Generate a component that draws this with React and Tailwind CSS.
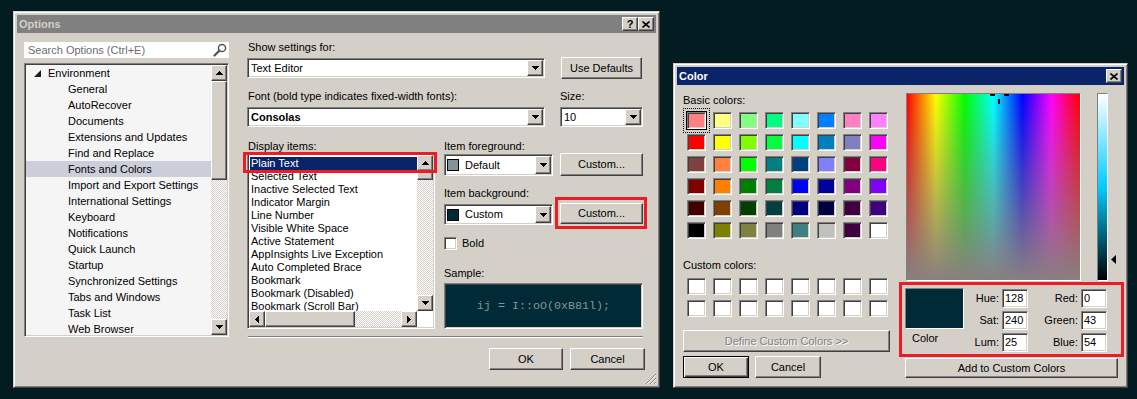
import React from "react";

// classic 3D edges
const raised =
  "bg-[#d4d0c8] border border-t-white border-l-white border-b-[#404040] border-r-[#404040] shadow-[inset_-1px_-1px_0_#808080]";
const sunken =
  "border border-t-[#808080] border-l-[#808080] border-b-white border-r-white shadow-[inset_1px_1px_0_#404040,inset_-1px_-1px_0_#d4d0c8]";
const checker =
  "bg-[image:repeating-conic-gradient(#d4d0c8_0_25%,#ffffff_0_50%)] bg-[length:2px_2px]";

const treeItems = [
  "General",
  "AutoRecover",
  "Documents",
  "Extensions and Updates",
  "Find and Replace",
  "Fonts and Colors",
  "Import and Export Settings",
  "International Settings",
  "Keyboard",
  "Notifications",
  "Quick Launch",
  "Startup",
  "Synchronized Settings",
  "Tabs and Windows",
  "Task List",
  "Web Browser",
];

const displayItems = [
  "Plain Text",
  "Selected Text",
  "Inactive Selected Text",
  "Indicator Margin",
  "Line Number",
  "Visible White Space",
  "Active Statement",
  "AppInsights Live Exception",
  "Auto Completed Brace",
  "Bookmark",
  "Bookmark (Disabled)",
  "Bookmark (Scroll Bar)",
];

const basicColors = [
  "bg-[#ff8080]", "bg-[#ffff80]", "bg-[#80ff80]", "bg-[#00ff80]", "bg-[#80ffff]", "bg-[#0080ff]", "bg-[#ff80c0]", "bg-[#ff80ff]",
  "bg-[#ff0000]", "bg-[#ffff00]", "bg-[#80ff00]", "bg-[#00ff40]", "bg-[#00ffff]", "bg-[#0080c0]", "bg-[#8080c0]", "bg-[#ff00ff]",
  "bg-[#804040]", "bg-[#ff8040]", "bg-[#00ff00]", "bg-[#008080]", "bg-[#004080]", "bg-[#8080ff]", "bg-[#800040]", "bg-[#ff0080]",
  "bg-[#800000]", "bg-[#ff8000]", "bg-[#008000]", "bg-[#008040]", "bg-[#0000ff]", "bg-[#0000a0]", "bg-[#800080]", "bg-[#8000ff]",
  "bg-[#400000]", "bg-[#804000]", "bg-[#004000]", "bg-[#004040]", "bg-[#000080]", "bg-[#000040]", "bg-[#400040]", "bg-[#400080]",
  "bg-[#000000]", "bg-[#808000]", "bg-[#808040]", "bg-[#808080]", "bg-[#408080]", "bg-[#c0c0c0]", "bg-[#400040]", "bg-[#ffffff]",
];

function Tri({ dir }) {
  if (dir === "up")
    return (
      <svg width="7" height="4" viewBox="0 0 7 4" shapeRendering="crispEdges">
        <path d="M0 4h7L3.5 0z" fill="#000" />
      </svg>
    );
  if (dir === "left")
    return (
      <svg width="4" height="7" viewBox="0 0 4 7" shapeRendering="crispEdges">
        <path d="M4 0v7L0 3.5z" fill="#000" />
      </svg>
    );
  if (dir === "right")
    return (
      <svg width="4" height="7" viewBox="0 0 4 7" shapeRendering="crispEdges">
        <path d="M0 0v7L4 3.5z" fill="#000" />
      </svg>
    );
  return (
    <svg width="7" height="4" viewBox="0 0 7 4" shapeRendering="crispEdges">
      <path d="M0 0h7L3.5 4z" fill="#000" />
    </svg>
  );
}

function ArrowBtn({ dir, className = "w-[16px] h-[16px]" }) {
  return (
    <div className={`${raised} ${className} flex items-center justify-center shrink-0`}>
      <Tri dir={dir} />
    </div>
  );
}

function Btn({ children, className = "", isDefault, disabled }) {
  const edge = isDefault
    ? "bg-[#d4d0c8] border border-black shadow-[inset_1px_1px_0_#fff,inset_-1px_-1px_0_#404040,inset_-2px_-2px_0_#808080]"
    : raised;
  const tone = disabled ? "text-[#808080] [text-shadow:1px_1px_0_#ffffff]" : "text-black";
  return (
    <button className={`${edge} ${tone} ${className} flex items-center justify-center shrink-0`}>
      {children}
    </button>
  );
}

function Combo({ className, children }) {
  return (
    <div className={`${sunken} bg-white p-[1px] flex items-stretch shrink-0 ${className}`}>
      <div className="flex-1 flex items-center overflow-hidden">{children}</div>
      <ArrowBtn dir="down" className="w-[16px]" />
    </div>
  );
}

function TitleBtn({ children }) {
  return (
    <div className={`${raised} w-[16px] h-[14px] flex items-center justify-center font-bold text-[11px] leading-none`}>
      {children}
    </div>
  );
}

function CloseGlyph() {
  return (
    <svg width="8" height="7" viewBox="0 0 8 7">
      <path d="M0.5 0.5L7.5 6.5M7.5 0.5L0.5 6.5" stroke="#000" strokeWidth="1.6" />
    </svg>
  );
}

function VScroll({ thumb }) {
  return (
    <div className="w-[16px] flex flex-col shrink-0">
      <ArrowBtn dir="up" />
      <div className={`${raised} ${thumb}`} />
      <div className={`flex-1 ${checker}`} />
      <ArrowBtn dir="down" />
    </div>
  );
}

function OptionsWindow() {
  return (
    <div className="absolute left-[13px] top-[11px] w-[647px] h-[377px] bg-[#d4d0c8] p-[3px] border border-t-[#d4d0c8] border-l-[#d4d0c8] border-b-[#404040] border-r-[#404040] shadow-[inset_1px_1px_0_#fff,inset_-1px_-1px_0_#808080] flex flex-col">
      {/* Title bar */}
      <div className="h-[18px] bg-[#808080] flex items-center pl-[2px] pr-[2px] shrink-0">
        <span className="font-bold text-[#d4d0c8]">Options</span>
        <div className="ml-auto flex">
          <TitleBtn>?</TitleBtn>
          <TitleBtn>
            <CloseGlyph />
          </TitleBtn>
        </div>
      </div>

      <div className="flex pl-[7px] pt-[7px]">
        {/* Left: search + tree */}
        <div className="w-[205px] flex flex-col shrink-0">
          <div className="mt-[2px] h-[16px] bg-white flex items-center pl-[4px] pr-[2px] text-[#6d6d6d]">
            <span>Search Options (Ctrl+E)</span>
            <svg className="ml-auto" width="14" height="14" viewBox="0 0 14 14">
              <circle cx="9" cy="5" r="3.6" fill="none" stroke="#555" strokeWidth="1.5" />
              <path d="M6.4 7.6L1.5 12.5" stroke="#555" strokeWidth="2.2" strokeLinecap="round" />
            </svg>
          </div>
          <div className={`mt-[5px] h-[274px] ${sunken} p-[1px] bg-[#f5f5f5] flex`}>
            <div className="flex-1 overflow-hidden">
              <div className="h-[16px] flex items-center pl-[8px]">
                <svg width="7" height="7" viewBox="0 0 7 7">
                  <path d="M7 0V7H0z" fill="#1e1e1e" />
                </svg>
                <span className="ml-[7px]">Environment</span>
              </div>
              {treeItems.map((t) => (
                <div
                  key={t}
                  className={`h-[16px] flex items-center pl-[42px] whitespace-nowrap ${
                    t === "Fonts and Colors" ? "bg-[#cdcedc]" : ""
                  }`}
                >
                  {t}
                </div>
              ))}
            </div>
            <VScroll thumb="h-[99px]" />
          </div>
        </div>

        {/* Right: settings */}
        <div className="ml-[18px] w-[398px] flex flex-col">
          <div className="h-[14px] leading-[14px] pl-[1px]">Show settings for:</div>
          <div className="mt-[3px] flex items-start">
            <Combo className="mt-[1px] w-[298px] h-[20px]">
              <span className="pl-[2px]">Text Editor</span>
            </Combo>
            <Btn className="ml-[16px] w-[81px] h-[22px]">Use Defaults</Btn>
          </div>

          <div className="mt-[10px] flex h-[14px] leading-[14px]">
            <span className="pl-[1px] w-[313px]">Font (bold type indicates fixed-width fonts):</span>
            <span>Size:</span>
          </div>
          <div className="mt-[4px] flex">
            <Combo className="w-[298px] h-[20px]">
              <span className="pl-[2px] font-bold">Consolas</span>
            </Combo>
            <Combo className="ml-[15px] w-[83px] h-[20px]">
              <span className="pl-[2px]">10</span>
            </Combo>
          </div>

          <div className="mt-[12px] flex">
            {/* Display items list */}
            <div className="w-[188px] flex flex-col shrink-0">
              <div className="h-[14px] leading-[14px] pl-[1px]">Display items:</div>
              <div className={`h-[176px] ${sunken} p-[1px] bg-white flex flex-col`}>
                <div className="h-[156px] flex">
                  <div className="flex-1 overflow-hidden pt-[2px]">
                    {displayItems.map((t, i) => (
                      <div
                        key={t}
                        className={`h-[13px] flex items-center whitespace-nowrap ${
                          i === 0 ? "ml-[1px] pl-[1px] bg-[#0a246a] text-white" : "pl-[2px]"
                        }`}
                      >
                        {t}
                      </div>
                    ))}
                  </div>
                  <VScroll thumb="h-[9px]" />
                </div>
                <div className="h-[16px] flex">
                  <ArrowBtn dir="left" />
                  <div className={`${raised} w-[90px]`} />
                  <div className={`flex-1 ${checker}`} />
                  <ArrowBtn dir="right" />
                  <div className="w-[16px] bg-white" />
                </div>
              </div>
            </div>

            {/* Foreground / background / sample */}
            <div className="ml-[9px] w-[199px] flex flex-col">
              <div className="h-[14px] leading-[14px]">Item foreground:</div>
              <div className="flex items-start">
                <Combo className="mt-[1px] w-[109px] h-[22px]">
                  <div className="ml-[1px] w-[12px] h-[12px] border border-black bg-[#839496]" />
                  <span className="ml-[6px]">Default</span>
                </Combo>
                <Btn className="ml-[7px] w-[83px] h-[23px]">Custom...</Btn>
              </div>

              <div className="mt-[10px] h-[14px] leading-[14px]">Item background:</div>
              <div className="mt-[3px] flex items-start">
                <Combo className="mt-[1px] w-[109px] h-[21px]">
                  <div className="ml-[1px] w-[12px] h-[12px] border border-black bg-[#002b36]" />
                  <span className="ml-[6px]">Custom</span>
                </Combo>
                <Btn className="ml-[7px] w-[83px] h-[21px]">Custom...</Btn>
              </div>

              <div className="mt-[12px] h-[13px] flex items-center">
                <div className={`w-[13px] h-[13px] ${sunken} bg-white`} />
                <span className="ml-[5px]">Bold</span>
              </div>

              <div className="mt-[16px] h-[14px] leading-[14px]">Sample:</div>
              <div
                className={`mt-[3px] h-[46px] ${sunken} bg-[#002b36] flex items-center justify-center font-['Liberation_Mono',monospace] text-[11.7px] text-[#839496]`}
              >
                ij = I::oO(0xB81l);
              </div>
            </div>
          </div>

          <div className="mt-[7px] ml-[1px] w-[395px] h-[2px] border-t border-t-[#808080] border-b border-b-white" />

          <div className="mt-[10px] flex justify-end">
            <Btn className="w-[74px] h-[22px]">OK</Btn>
            <Btn className="ml-[7px] w-[75px] h-[22px]">Cancel</Btn>
          </div>
        </div>
      </div>

      {/* size grip */}
      <svg className="absolute right-[2px] bottom-[2px]" width="12" height="12" viewBox="0 0 12 12">
        <path d="M11 1L1 11M11 5L5 11M11 9L9 11" stroke="#808080" strokeWidth="1" />
        <path d="M11 2L2 11M11 6L6 11M11 10L10 11" stroke="#ffffff" strokeWidth="1" />
      </svg>
    </div>
  );
}

function Field({ label, value, labelW }) {
  return (
    <div className="flex items-center h-[19px]">
      <span className={`${labelW} text-right`}>{label}</span>
      <div className={`ml-[3px] w-[26px] h-[19px] ${sunken} bg-white flex items-center pl-[2px]`}>{value}</div>
    </div>
  );
}

function ColorWindow() {
  return (
    <div className="absolute left-[673px] top-[63px] w-[455px] h-[325px] bg-[#d4d0c8] p-[3px] border border-t-[#d4d0c8] border-l-[#d4d0c8] border-b-[#404040] border-r-[#404040] shadow-[inset_1px_1px_0_#fff,inset_-1px_-1px_0_#808080] flex flex-col">
      <div className="h-[18px] bg-[#0a246a] flex items-center pl-[2px] pr-[2px] shrink-0">
        <span className="font-bold text-white">Color</span>
        <div className="ml-auto flex">
          <TitleBtn>
            <CloseGlyph />
          </TitleBtn>
        </div>
      </div>

      <div className="flex pl-[6px] pt-[8px]">
        {/* Left column */}
        <div className="w-[207px] flex flex-col shrink-0">
          <div className="h-[14px] leading-[14px]">Basic colors:</div>
          <div className="mt-[5px] ml-[4px] grid grid-cols-[repeat(8,19px)] gap-x-[7px] gap-y-[5px]">
            {basicColors.map((c, i) => (
              <div
                key={i}
                className={`w-[19px] h-[17px] ${sunken} ${c} ${
                  i === 0 ? "ring-1 ring-black outline-1 outline-dotted outline-black outline-offset-[3px]" : ""
                }`}
              />
            ))}
          </div>

          <div className="mt-[19px] h-[14px] leading-[14px]">Custom colors:</div>
          <div className="mt-[6px] ml-[4px] grid grid-cols-[repeat(8,19px)] gap-x-[7px] gap-y-[5px]">
            {Array.from({ length: 16 }).map((_, i) => (
              <div key={i} className={`w-[19px] h-[17px] ${sunken} bg-white`} />
            ))}
          </div>

          <Btn disabled className="mt-[13px] w-[207px] h-[22px]">
            Define Custom Colors &gt;&gt;
          </Btn>
          <div className="mt-[4px] flex">
            <Btn isDefault className="w-[66px] h-[22px]">
              OK
            </Btn>
            <Btn className="ml-[6px] w-[66px] h-[22px]">Cancel</Btn>
          </div>
        </div>

        {/* Right column */}
        <div className="ml-[15px] w-[219px] flex flex-col">
          <div className="flex">
            <div className="relative ml-[1px] w-[175px] h-[188px] border border-t-[#808080] border-l-[#808080] border-b-white border-r-white bg-[image:linear-gradient(to_bottom,rgba(136,128,128,0),#887f80),linear-gradient(to_right,#ff0000,#ffff00,#00ff00,#00ffff,#0000ff,#ff00ff,#ff0000)]">
              <div className="absolute left-[83px] top-0 w-[5px] h-[2px] bg-black" />
              <div className="absolute left-[97px] top-0 w-[5px] h-[2px] bg-black" />
              <div className="absolute left-[91px] top-[5px] w-[2px] h-[5px] bg-black" />
            </div>
            <div className="relative ml-[16px] w-[11px] h-[188px] border border-t-[#808080] border-l-[#808080] border-b-white border-r-white bg-[image:linear-gradient(to_bottom,#ffffff,#00ccff_50%,#000000)]">
              <svg className="absolute left-[13px] top-[161px]" width="5" height="9" viewBox="0 0 5 9">
                <path d="M5 0v9L0 4.5z" fill="#000" />
              </svg>
            </div>
          </div>

          <div className="mt-[7px] flex">
            <div className="w-[59px] flex flex-col">
              <div className="h-[41px] border border-t-[#808080] border-l-[#808080] border-b-white border-r-white bg-[#002b36]" />
              <div className="mt-[2px] h-[14px] leading-[14px] pl-[7px]">Color</div>
            </div>
            <div className="mt-[1px] flex flex-col gap-[3px]">
              <Field label="Hue:" value="128" labelW="w-[35px]" />
              <Field label="Sat:" value="240" labelW="w-[35px]" />
              <Field label="Lum:" value="25" labelW="w-[35px]" />
            </div>
            <div className="mt-[1px] flex flex-col gap-[3px]">
              <Field label="Red:" value="0" labelW="w-[50px]" />
              <Field label="Green:" value="43" labelW="w-[50px]" />
              <Field label="Blue:" value="54" labelW="w-[50px]" />
            </div>
          </div>

          <Btn className="mt-[6px] w-[213px] h-[20px]">Add to Custom Colors</Btn>
        </div>
      </div>
    </div>
  );
}

export default function App() {
  return (
    <div className="relative w-[1137px] h-[399px] overflow-hidden bg-[#021c21] font-['Liberation_Sans',Arial,sans-serif] text-[11px] leading-[13px] text-black">
      <OptionsWindow />
      <ColorWindow />
      {/* red annotation boxes */}
      <div className="absolute left-[243px] top-[152px] w-[194px] h-[21px] border-[3px] border-[#ed1c24]" />
      <div className="absolute left-[555px] top-[197px] w-[92px] h-[32px] border-[3px] border-[#ed1c24]" />
      <div className="absolute left-[899px] top-[282px] w-[225px] h-[75px] border-[3px] border-[#ed1c24]" />
    </div>
  );
}
